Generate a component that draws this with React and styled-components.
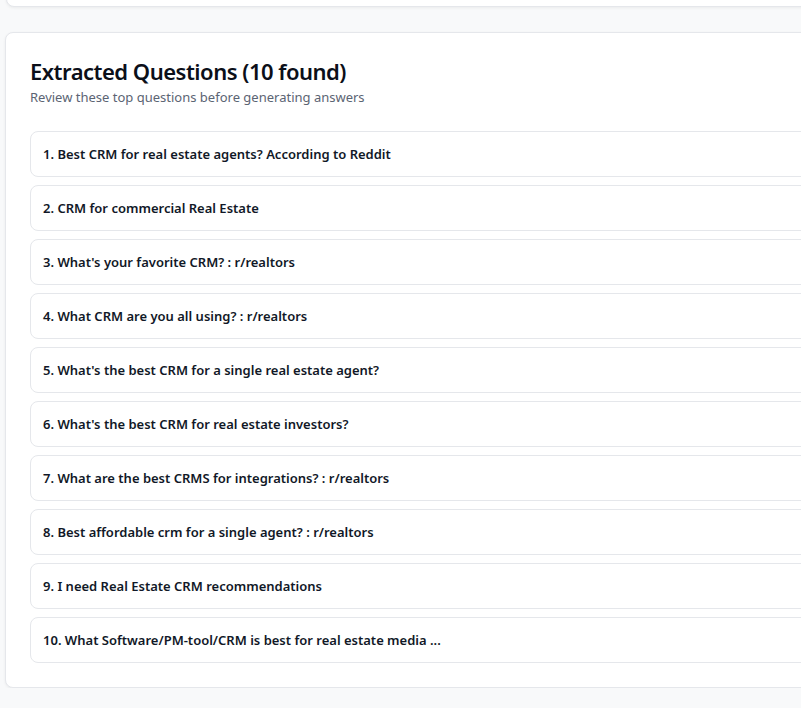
import styled, { createGlobalStyle } from 'styled-components';

const GlobalStyle = createGlobalStyle`
  html, body {
    margin: 0;
    padding: 0;
    background: #f8f9fa;
    overflow: hidden;
  }
  body {
    font-family: "Noto Sans", "Open Sans", Arial, sans-serif;
    color: #111827;
  }
`;

const Page = styled.div`
  width: 1200px;
  padding: 0 0 0 5px;
  box-sizing: border-box;
`;

const Card = styled.section`
  background: #ffffff;
  border: 1px solid #e5e7eb;
  border-radius: 8px;
  box-shadow: 0 1px 3px rgba(0, 0, 0, 0.06);
  box-sizing: border-box;
`;

const TopCard = styled(Card)`
  height: 40px;
  margin-top: -33px;
  margin-left: 1px;
`;

const QuestionsCard = styled(Card)`
  margin-top: 25px;
  padding: 24px;
`;

const Title = styled.h2`
  margin: 0;
  font-size: 22px;
  line-height: 28px;
  font-weight: 600;
  color: #0b0f19;
  letter-spacing: -0.5px;
`;

const Subtitle = styled.p`
  margin: 3px 0 0;
  font-size: 13px;
  line-height: 18px;
  color: #5b6473;
`;

const List = styled.ol`
  list-style: none;
  margin: 25px 0 0;
  padding: 0;
  display: flex;
  flex-direction: column;
  gap: 8px;
`;

const Item = styled.li`
  border: 1px solid #e5e7eb;
  border-radius: 8px;
  padding: 12px;
  font-size: 13px;
  line-height: 20px;
  font-weight: 600;
  color: #111827;
  white-space: nowrap;
`;

const questions = [
  'Best CRM for real estate agents? According to Reddit',
  'CRM for commercial Real Estate',
  "What's your favorite CRM? : r/realtors",
  'What CRM are you all using? : r/realtors',
  "What's the best CRM for a single real estate agent?",
  "What's the best CRM for real estate investors?",
  'What are the best CRMS for integrations? : r/realtors',
  'Best affordable crm for a single agent? : r/realtors',
  'I need Real Estate CRM recommendations',
  'What Software/PM-tool/CRM is best for real estate media ...',
];

export default function App() {
  return (
    <>
      <GlobalStyle />
      <Page>
        <TopCard />
        <QuestionsCard>
          <Title>Extracted Questions ({questions.length} found)</Title>
          <Subtitle>Review these top questions before generating answers</Subtitle>
          <List>
            {questions.map((q, i) => (
              <Item key={i}>
                {i + 1}. {q}
              </Item>
            ))}
          </List>
        </QuestionsCard>
      </Page>
    </>
  );
}
